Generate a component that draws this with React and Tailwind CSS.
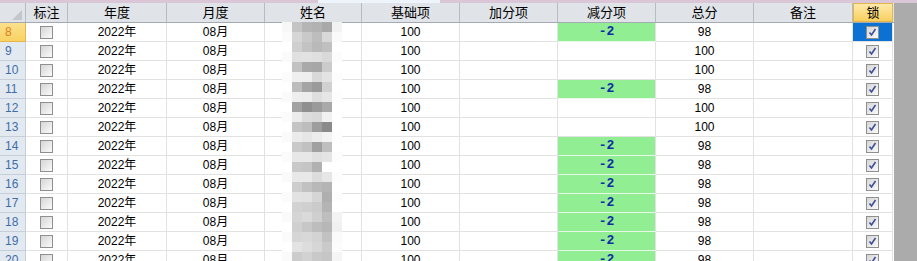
import React from "react";

const cols = [
  { key: "flag", label: "标注", w: "w-[42px]" },
  { key: "year", label: "年度", w: "w-[99px]" },
  { key: "month", label: "月度", w: "w-[98px]" },
  { key: "name", label: "姓名", w: "w-[97px]" },
  { key: "base", label: "基础项", w: "w-[98px]" },
  { key: "plus", label: "加分项", w: "w-[98px]" },
  { key: "minus", label: "减分项", w: "w-[98px]" },
  { key: "total", label: "总分", w: "w-[98px]" },
  { key: "note", label: "备注", w: "w-[99px]" },
];

const minusRows = [8, 11, 14, 15, 16, 17, 18, 19, 20];
const rows = Array.from({ length: 13 }, (_, i) => {
  const n = i + 8;
  const minus = minusRows.includes(n);
  return { n, minus, total: minus ? 98 : 100 };
});

// mosaic shades for the blurred names column
const shades = [
  "#f7f7f7", "#c4c4c4", "#b5b5b5", "#b2b2b2", "#a9a9a9", "#f2f2f2",
  "#fbfbfb", "#d6d6d6", "#c9c9c9", "#bdbdbd", "#d8d8d8", "#fafafa",
  "#ffffff", "#cfcfcf", "#c3c3c3", "#b9b9b9", "#c0c0c0", "#ffffff",
  "#fafafa", "#e0e0e0", "#e2e2e2", "#dfdfdf", "#d9d9d9", "#fcfcfc",
  "#ffffff", "#c2c2c2", "#a9a9a9", "#a7a7a7", "#cbcbcb", "#ffffff",
  "#fbfbfb", "#efefef", "#eeeeee", "#d9d9d9", "#e3e3e3", "#fdfdfd",
  "#ffffff", "#bcbcbc", "#a4a4a4", "#9a9a9a", "#d1d1d1", "#ffffff",
  "#fafafa", "#eeeeee", "#ececec", "#dedede", "#e6e6e6", "#fdfdfd",
  "#ffffff", "#a2a2a2", "#8f8f8f", "#9a9a9a", "#a9a9a9", "#ffffff",
  "#fbfbfb", "#ececec", "#dcdcdc", "#d9d9d9", "#f1f1f1", "#ffffff",
  "#ffffff", "#c4c4c4", "#bdbdbd", "#9d9d9d", "#8a8a8a", "#ffffff",
  "#fafafa", "#ebebeb", "#e6e6e6", "#ececec", "#f3f3f3", "#fdfdfd",
  "#ffffff", "#c9c9c9", "#c1c1c1", "#a0a0a0", "#bfbfbf", "#ffffff",
  "#fbfbfb", "#e7e7e7", "#e7e7e7", "#e0e0e0", "#e4e4e4", "#fdfdfd",
  "#ffffff", "#c8c8c8", "#c5c5c5", "#b1b1b1", "#ffffff", "#ffffff",
  "#fafafa", "#e8e8e8", "#e8e8e8", "#dcdcdc", "#e6e6e6", "#fdfdfd",
  "#ffffff", "#cdcdcd", "#c1c1c1", "#b8b8b8", "#b4b4b4", "#ffffff",
  "#fbfbfb", "#e2e2e2", "#e1e1e1", "#d5d5d5", "#afafaf", "#fdfdfd",
  "#ffffff", "#d2d2d2", "#cfcfcf", "#cbcbcb", "#b4b4b4", "#ffffff",
  "#fafafa", "#d5d5d5", "#dadada", "#cfcfcf", "#bebebe", "#f3f3f3",
  "#ffffff", "#d0d0d0", "#c7c7c7", "#bdbdbd", "#b7b7b7", "#f0f0f0",
  "#fbfbfb", "#d6d6d6", "#d8d8d8", "#d3d3d3", "#c2c2c2", "#fafafa",
  "#ffffff", "#e3e3e3", "#dddddd", "#d6d6d6", "#cacaca", "#fcfcfc",
  "#fafafa", "#cccccc", "#d2d2d2", "#c9c9c9", "#c6c6c6", "#f5f5f5",
  "#ffffff", "#d9d9d9", "#d4d4d4", "#cfcfcf", "#cbcbcb", "#fafafa",
];

const Mosaic = () => {
  const blocks = [];
  for (let r = 0; r < 25; r++) {
    for (let c = 0; c < 6; c++) {
      const fill = shades[(r * 6 + c) % shades.length];
      blocks.push(
        <rect key={`${r}-${c}`} x={c * 10} y={r * 10} width="10" height="10" fill={fill} />
      );
    }
  }
  return (
    <svg width="60" height="240" className="absolute left-[282px] top-[22px]">
      {blocks}
    </svg>
  );
};

const Box = ({ checked }) => (
  <span className="inline-flex h-[13px] w-[13px] items-center justify-center border border-[#8f8f8f] bg-gradient-to-br from-[#d6d6d6] to-[#fafafa]">
    {checked && (
      <svg width="9" height="9" viewBox="0 0 9 9">
        <path d="M1.5 4.5 L3.5 7 L7.5 1" fill="none" stroke="#3d4f96" strokeWidth="1.6" />
      </svg>
    )}
  </span>
);

const Cell = ({ w, className = "", children }) => (
  <div className={`${w} flex h-[19px] shrink-0 items-center justify-center border-b border-r border-[#e2e2e2] ${className}`}>
    {children}
  </div>
);

export default function App() {
  return (
    <div
      className="relative h-[261px] w-[917px] overflow-hidden bg-white text-[12px] text-black"
      style={{ fontFamily: '"Liberation Sans", "Noto Sans CJK SC", sans-serif' }}
    >
      <div className="flex h-[3px]">
        <div className="w-[318px] bg-[#dac6d6]" />
        <div className="w-[122px] bg-[#eef4fb]" />
        <div className="flex-1 bg-[#dac6d6]" />
      </div>
      <div className="flex">
        <div className="w-[894px] shrink-0">
          {/* header */}
          <div className="flex h-[20px] border-b border-[#a3aab3] bg-[#e0e4e9] text-[13px]">
            <div className="relative w-[26px] shrink-0 border-r border-[#b6bcc4]">
              <svg width="10" height="10" className="absolute bottom-[2px] right-[3px]">
                <polygon points="10,0 10,10 0,10" fill="#c3c7cd" />
              </svg>
            </div>
            {cols.map((c) => (
              <div key={c.key} className={`${c.w} flex shrink-0 items-center justify-center border-r border-[#b6bcc4]`}>
                {c.label}
              </div>
            ))}
            <div className="flex w-[40px] shrink-0 items-center justify-center border border-[#e2b54c] bg-gradient-to-b from-[#fee9a8] to-[#f9cf5c]">
              锁
            </div>
          </div>
          {/* body */}
          {rows.map((r) => {
            const active = r.n === 8;
            return (
              <div key={r.n} className="flex">
                <div
                  className={`flex h-[19px] w-[26px] shrink-0 items-center border-b border-r pl-[5px] ${
                    active
                      ? "border-[#e5b64d] bg-gradient-to-b from-[#fbe08c] to-[#f8d262] text-[#d9821a]"
                      : "border-[#c6ced9] bg-[#e3e9f1] text-[#3e6ea6]"
                  }`}
                >
                  {r.n}
                </div>
                <Cell w="w-[42px]">
                  <Box />
                </Cell>
                <Cell w="w-[99px]">2022年</Cell>
                <Cell w="w-[98px]">08月</Cell>
                <Cell w="w-[97px]" />
                <Cell w="w-[98px]">100</Cell>
                <Cell w="w-[98px]" />
                <Cell
                  w="w-[98px]"
                  className={r.minus ? "bg-[#92ee92] font-bold text-[13px] text-[#0d2ca8] border-b-[#e8f8e8]" : ""}
                >
                  {r.minus ? <span style={{ fontFamily: '"Liberation Mono", monospace' }}>-2</span> : ""}
                </Cell>
                <Cell w="w-[98px]">{r.total}</Cell>
                <Cell w="w-[99px]" />
                <Cell w="w-[40px]" className={active ? "bg-[#0b72d4]" : ""}>
                  <Box checked />
                </Cell>
              </div>
            );
          })}
        </div>
        <div className="flex-1 bg-[#ababab]" />
      </div>
      <Mosaic />
    </div>
  );
}
